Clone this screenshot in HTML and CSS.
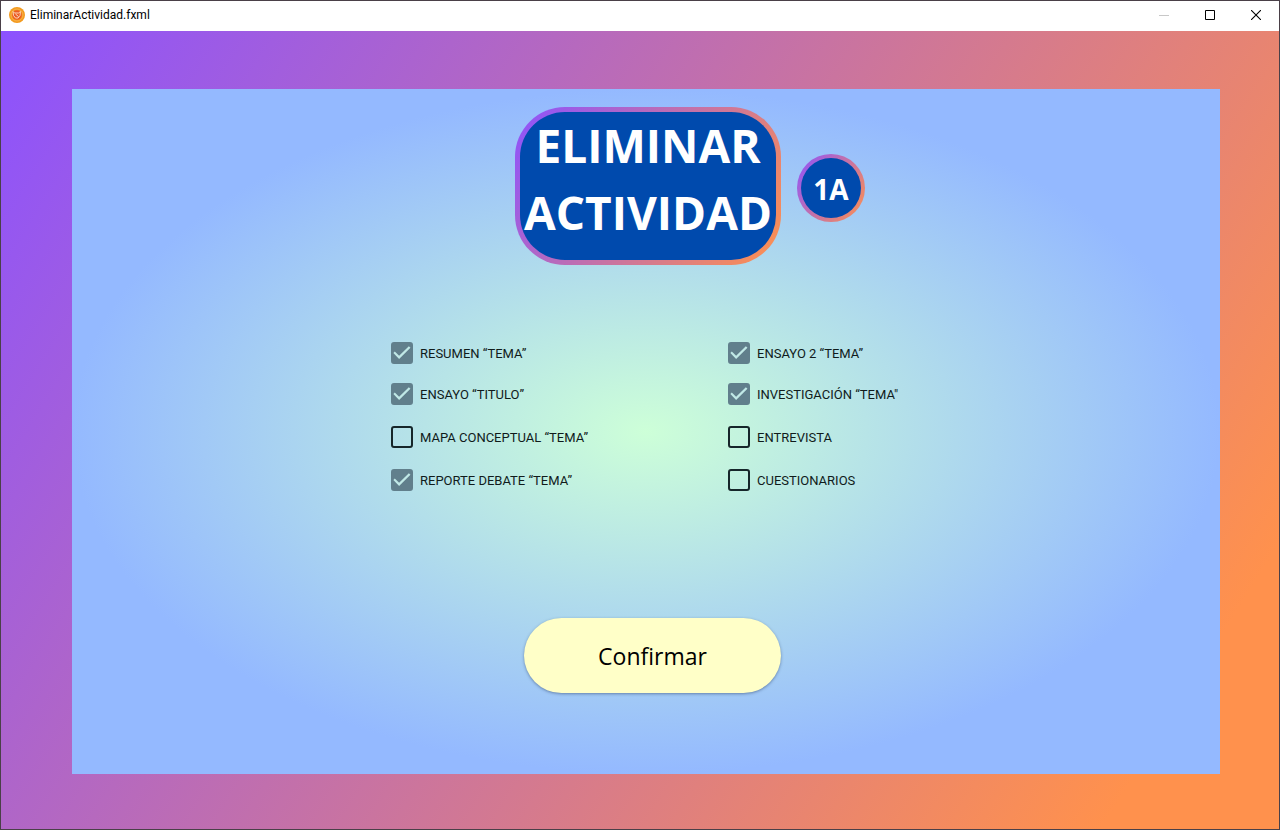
FILE: index.html
```html
<!DOCTYPE html>
<html lang="es">
<head>
<meta charset="utf-8">
<meta name="viewport" content="width=device-width, initial-scale=1">
<title>EliminarActividad.fxml</title>
<link rel="stylesheet" href="styles.css">
</head>
<body>
<div class="window">
  <header class="titlebar">
    <svg class="app-icon" viewBox="0 0 16 16" aria-hidden="true">
      <circle cx="8" cy="8" r="8" fill="#f39a1d"/>
      <circle cx="8" cy="8" r="6" fill="none" stroke="#f8b04c" stroke-width="1"/>
      <circle cx="8" cy="8" r="4.800" fill="#ec5a24"/>
      <path d="M4 4.500l1.500 1.500h4l2-1.500-.5 4-2 2.500H6.500L4.500 8.500zM6.500 7l3 2.500" fill="none" stroke="#fbd9b8" stroke-width="1"/>
    </svg>
    <span class="caption">EliminarActividad.fxml</span>
    <div class="controls">
      <button class="control" type="button" aria-label="Minimizar" disabled><svg viewBox="0 0 10 10"><path d="M0 5.500h10" stroke="#c8c8c8"/></svg></button>
      <button class="control" type="button" aria-label="Maximizar"><svg viewBox="0 0 10 10"><path d="M.5.5h9v9h-9z" fill="none" stroke="#000"/></svg></button>
      <button class="control" type="button" aria-label="Cerrar"><svg viewBox="0 0 10 10"><path d="M0 0l10 10M10 0L0 10" stroke="#000" stroke-width="1.100"/></svg></button>
    </div>
  </header>
  <main class="frame">
    <form class="panel">
      <div class="heading">
        <h1 class="title">ELIMINAR ACTIVIDAD</h1>
        <span class="group">1A</span>
      </div>
      <div class="activities">
        <label class="activity"><input type="checkbox" checked>RESUMEN “TEMA”</label>
        <label class="activity"><input type="checkbox" checked>ENSAYO “TITULO”</label>
        <label class="activity"><input type="checkbox">MAPA CONCEPTUAL “TEMA”</label>
        <label class="activity"><input type="checkbox" checked>REPORTE DEBATE “TEMA”</label>
        <label class="activity"><input type="checkbox" checked>ENSAYO 2 “TEMA”</label>
        <label class="activity"><input type="checkbox" checked>INVESTIGACIÓN “TEMA"</label>
        <label class="activity"><input type="checkbox">ENTREVISTA</label>
        <label class="activity"><input type="checkbox">CUESTIONARIOS</label>
      </div>
      <button class="confirm" type="button">Confirmar</button>
    </form>
  </main>
</div>
</body>
</html>
```
FILE: styles.css
```css
* {
  box-sizing: border-box;
}

body {
  margin: 0;
  font-family: "Open Sans", "Noto Sans", sans-serif;
}

.window {
  display: flex;
  flex-direction: column;
  min-height: 100vh;
  border: 1px solid #4a4048;
}

.titlebar {
  display: flex;
  align-items: center;
  height: 30px;
  padding: 0 0 2px 8px;
  gap: 5px;
  background: #fff;
}

.app-icon {
  width: 16px;
  height: 16px;
}

.caption {
  font-family: Roboto, sans-serif;
  font-size: 12px;
  color: #000;
}

.controls {
  display: flex;
  height: 100%;
  margin-left: auto;
}

.control {
  display: grid;
  place-items: center;
  width: 46px;
  padding: 0;
  border: 0;
  background: none;
}

.control svg {
  width: 10px;
  height: 10px;
}

.frame {
  display: flex;
  flex: 1;
  padding: 58px 59px 55px 71px;
  background: linear-gradient(122deg, #8c52ff 0%, #ff914d 90%);
}

.panel {
  display: flex;
  flex: 1;
  flex-direction: column;
  align-items: center;
  padding: 18px 0 81px;
  background: radial-gradient(closest-side, #cdffd8, #94b9ff);
}

.heading {
  display: grid;
  grid-template-columns: 1fr auto 1fr;
  align-items: center;
  column-gap: 16px;
  width: 100%;
  padding-left: 4px;
}

.title,
.group {
  border: 5px solid transparent;
  background:
    linear-gradient(#004aad, #004aad) padding-box,
    linear-gradient(122deg, #8c52ff, #ff914d) border-box;
  color: #fff;
  font-weight: 700;
  text-align: center;
}

.title {
  grid-column: 2;
  width: 266px;
  height: 158px;
  margin: 0;
  border-radius: 50px;
  font-size: 46px;
  line-height: 67px;
}

.group {
  width: 68px;
  height: 68px;
  margin-top: 3px;
  border-width: 4px;
  border-radius: 50%;
  font-size: 28px;
  line-height: 63px;
}

.activities {
  display: grid;
  grid-template-rows: 41px 43px 43px 22px;
  grid-template-columns: 337px 173px;
  grid-auto-flow: column;
  align-items: start;
  margin-top: 77px;
}

.activity {
  display: flex;
  align-items: center;
  gap: 7px;
  height: 22px;
  color: #101b1b;
  font-family: Roboto, sans-serif;
  font-size: 13px;
  white-space: nowrap;
}

.activity input {
  display: block;
  flex: none;
  width: 22px;
  height: 22px;
  margin: 0;
  border: 2px solid #16262a;
  border-radius: 3px;
  appearance: none;
}

.activity input:checked {
  border-color: #617f8c;
  background: #617f8c;
}

.activity input:checked::after {
  content: "";
  display: block;
  height: 18px;
  background: #c0e8e6;
  clip-path: polygon(2% 50%, 10% 41%, 34% 65%, 88% 12%, 97% 21%, 34% 83%);
}

.confirm {
  width: 257px;
  height: 75px;
  margin-top: auto;
  margin-left: 13px;
  border: 0;
  border-radius: 38px;
  background: #ffffc8;
  box-shadow: 0 1px 3px rgb(40 60 100 / 50%);
  color: #000;
  font-family: "Open Sans", sans-serif;
  font-size: 23px;
}
```
